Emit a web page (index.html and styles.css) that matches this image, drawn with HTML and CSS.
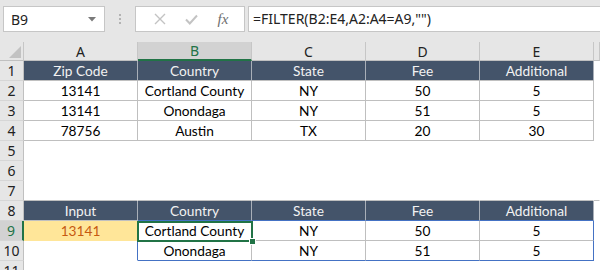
FILE: index.html
```html
<!DOCTYPE html>
<html lang="en">
<head>
    <meta charset="UTF-8">
    <meta name="viewport" content="width=device-width, initial-scale=1.0">
    <title>FILTER example</title>
    <link rel="stylesheet" href="styles.css">
</head>
<body>
    <div class="formula-bar">
        <div class="name-box">
            <span>B9</span>
            <svg class="drop" width="8" height="5" viewBox="0 0 8 5"><path d="M0 0H8L4 4.5Z" fill="#7a7a7a"/></svg>
        </div>
        <div class="grip"><i></i><i></i><i></i></div>
        <div class="fx-buttons">
            <svg width="12" height="12" viewBox="0 0 12 12"><path d="M1 1L11 11M11 1L1 11" stroke="#c3c3c3" stroke-width="1.4"/></svg>
            <svg width="13" height="11" viewBox="0 0 13 11"><path d="M1 5.5L4.8 9.5L12 1.5" stroke="#c3c3c3" stroke-width="2" fill="none"/></svg>
            <span class="fx">fx</span>
        </div>
        <div class="formula-input">=FILTER(B2:E4,A2:A4=A9,"")</div>
    </div>

    <table class="sheet">
        <colgroup>
            <col class="col-rh">
            <col class="col-data"><col class="col-data"><col class="col-data"><col class="col-data"><col class="col-data">
            <col>
        </colgroup>
        <thead>
            <tr>
                <th class="corner"><svg width="12" height="12" viewBox="0 0 12 12"><path d="M12 0V12H0Z" fill="#c2c2c2"/></svg></th>
                <th>A</th>
                <th class="active-col">B</th>
                <th>C</th>
                <th>D</th>
                <th>E</th>
                <th></th>
            </tr>
        </thead>
        <tbody>
            <tr class="hdr">
                <td class="rh">1</td>
                <td>Zip Code</td><td>Country</td><td>State</td><td>Fee</td><td>Additional</td><td class="blank"></td>
            </tr>
            <tr class="data">
                <td class="rh">2</td>
                <td>13141</td><td>Cortland County</td><td>NY</td><td>50</td><td>5</td><td class="blank"></td>
            </tr>
            <tr class="data">
                <td class="rh">3</td>
                <td>13141</td><td>Onondaga</td><td>NY</td><td>51</td><td>5</td><td class="blank"></td>
            </tr>
            <tr class="data">
                <td class="rh">4</td>
                <td>78756</td><td>Austin</td><td>TX</td><td>20</td><td>30</td><td class="blank"></td>
            </tr>
            <tr>
                <td class="rh">5</td>
                <td></td><td></td><td></td><td></td><td></td><td></td>
            </tr>
            <tr>
                <td class="rh">6</td>
                <td></td><td></td><td></td><td></td><td></td><td></td>
            </tr>
            <tr class="above-hdr">
                <td class="rh">7</td>
                <td></td><td></td><td></td><td></td><td></td><td></td>
            </tr>
            <tr class="hdr spill-top">
                <td class="rh">8</td>
                <td>Input</td><td>Country</td><td>State</td><td>Fee</td><td>Additional</td><td class="blank"></td>
            </tr>
            <tr class="data spill">
                <td class="rh active-row">9</td>
                <td class="input">13141</td>
                <td class="selected">Cortland County<div class="sel"><span class="handle"></span></div></td>
                <td>NY</td><td>50</td><td class="spill-end">5</td><td class="blank"></td>
            </tr>
            <tr class="data spill spill-last">
                <td class="rh">10</td>
                <td class="empty"></td>
                <td>Onondaga</td><td>NY</td><td>51</td><td class="spill-end">5</td><td class="blank"></td>
            </tr>
            <tr>
                <td class="rh">11</td>
                <td></td><td></td><td></td><td></td><td></td><td></td>
            </tr>
        </tbody>
    </table>
</body>
</html>
```

FILE: styles.css
```css
body {
    margin: 0;
    background-color: #ffffff;
    font-family: Lato, 'Open Sans', sans-serif;
    overflow: hidden;
}
.formula-bar {
    height: 42px;
    background-color: #e6e6e6;
    display: flex;
    align-items: flex-start;
    padding-top: 6px;
    box-sizing: border-box;
}
.name-box {
    margin-left: 3px;
    width: 102px;
    height: 26px;
    box-sizing: border-box;
    background-color: #ffffff;
    border: 1px solid #c6c6c6;
    display: flex;
    align-items: center;
    justify-content: space-between;
    padding: 0 8px 0 7px;
    font-family: 'Noto Sans', sans-serif;
    font-size: 14px;
    color: #222;
}
.grip {
    width: 30px;
    height: 26px;
    display: flex;
    flex-direction: column;
    align-items: center;
    justify-content: center;
    gap: 2px;
}
.grip i {
    width: 2px;
    height: 2px;
    background-color: #b3b3b3;
}
.fx-buttons {
    width: 110px;
    height: 26px;
    box-sizing: border-box;
    background-color: #ffffff;
    border: 1px solid #c6c6c6;
    display: flex;
    align-items: center;
    justify-content: space-around;
    padding: 0 6px 0 8px;
}
.fx {
    font-family: 'Liberation Serif', serif;
    font-style: italic;
    font-size: 15px;
    color: #6e6e6e;
}
.formula-input {
    flex: 1;
    margin-left: 3px;
    height: 26px;
    box-sizing: border-box;
    background-color: #ffffff;
    border: 1px solid #c6c6c6;
    border-right: none;
    padding-left: 4px;
    font-family: 'Noto Sans', sans-serif;
    font-size: 14px;
    line-height: 24px;
    color: #222;
}
.sheet {
    width: 600px;
    table-layout: fixed;
    border-collapse: separate;
    border-spacing: 0;
}
.col-rh {
    width: 24px;
}
.col-data {
    width: 114px;
}
.sheet thead tr {
    height: 19px;
}
.sheet th {
    padding: 0;
    background-color: #e6e6e6;
    border-right: 1px solid #c6c6c6;
    border-bottom: 1px solid #c0c0c0;
    font-family: 'Noto Sans', sans-serif;
    font-weight: normal;
    font-size: 14px;
    color: #222;
    line-height: 17px;
}
.sheet th.corner {
    text-align: right;
    vertical-align: bottom;
    padding: 0 2px 2px 0;
}
.corner svg {
    display: block;
    margin-left: auto;
}
.sheet th.active-col {
    background-color: #d2d2d2;
    border-bottom: 2px solid #217346;
    line-height: 16px;
    color: #217346;
}
.sheet tbody tr {
    height: 20px;
}
.sheet td {
    padding: 0;
    border-right: 1px solid transparent;
    border-bottom: 1px solid transparent;
    text-align: center;
    font-size: 13.7px;
    line-height: 18px;
    color: #000;
    white-space: nowrap;
}
.sheet td.rh {
    background-color: #e6e6e6;
    border-right: 1px solid #c0c0c0;
    border-bottom: 1px solid #d6d6d6;
    font-family: 'Noto Sans', sans-serif;
    font-size: 14px;
    color: #222;
}
.sheet td.rh.active-row {
    background-color: #d2d2d2;
    border-right: 2px solid #217346;
    color: #217346;
}
.hdr td {
    background-color: #44546a;
    color: #f2f2f2;
    border-right-color: #a9afb8;
    border-bottom-color: #c0c0c0;
}
.data td {
    border-right-color: #bfbfbf;
    border-bottom-color: #bfbfbf;
}
.above-hdr td {
    border-bottom-color: #bfbfbf;
}
.sheet td.blank {
    background-color: #ffffff;
    border-color: transparent;
}
/* spill range B9:E10 */
.spill-top td:nth-child(n+3):nth-child(-n+6) {
    border-bottom-color: #4472c4;
}
.spill td:nth-child(2) {
    border-right-color: #4472c4;
}
.spill td.spill-end {
    border-right-color: #4472c4;
}
.spill-last td:nth-child(n+3):nth-child(-n+6) {
    border-bottom-color: #4472c4;
}
.sheet td.input {
    background-color: #ffe699;
    color: #c65911;
    border-bottom-color: transparent;
}
.sheet td.empty {
    border-bottom-color: transparent;
}
.sheet td.selected {
    position: relative;
}
.sel {
    position: absolute;
    left: -1px;
    top: 0;
    right: -2px;
    bottom: -2px;
    border: 2px solid #217346;
}
.handle {
    position: absolute;
    right: -5px;
    bottom: -5px;
    width: 5px;
    height: 5px;
    background-color: #217346;
    border: 1px solid #ffffff;
}
```
